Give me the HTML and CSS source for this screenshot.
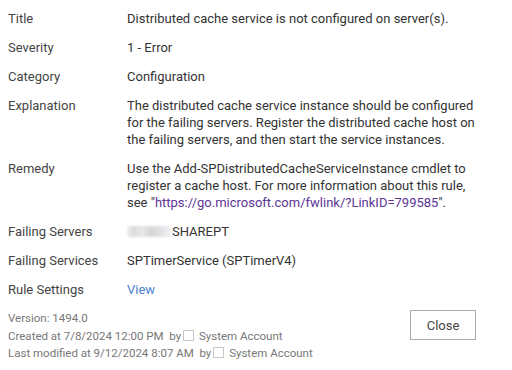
FILE: index.html
```html
<!DOCTYPE html>
<html lang="en">
<head>
  <meta charset="UTF-8">
  <title>Health Analyzer Rule</title>
  <link rel="stylesheet" href="styles.css">
</head>
<body>
  <div class="details">
    <div class="label">Title</div>
    <div class="value">Distributed cache service is not configured on server(s).</div>

    <div class="label">Severity</div>
    <div class="value">1 - Error</div>

    <div class="label">Category</div>
    <div class="value">Configuration</div>

    <div class="label">Explanation</div>
    <div class="value">The distributed cache service instance should be configured for the failing servers. Register the distributed cache host on the failing servers, and then start the service instances.</div>

    <div class="label">Remedy</div>
    <div class="value">Use the Add-SPDistributedCacheServiceInstance cmdlet to register a cache host. For more information about this rule, see "<a class="visited" href="#">https://go.microsoft.com/fwlink/?LinkID=799585</a>".</div>

    <div class="label">Failing Servers</div>
    <div class="value"><span class="blurred"></span>SHAREPT</div>

    <div class="label">Failing Services</div>
    <div class="value">SPTimerService (SPTimerV4)</div>

    <div class="label">Rule Settings</div>
    <div class="value"><a class="link" href="#">View</a></div>
  </div>

  <div class="footer">
    <div class="meta">
      <div>Version: 1494.0</div>
      <div>Created at 7/8/2024 12:00 PM&nbsp; by<span class="user-box"></span> System Account</div>
      <div>Last modified at 9/12/2024 8:07 AM&nbsp; by<span class="user-box"></span> System Account</div>
    </div>
    <button class="btn">Close</button>
  </div>
</body>
</html>
```

FILE: styles.css
```css
body {
  font-family: Roboto, 'Noto Sans', sans-serif;
  font-size: 13px;
  margin: 0;
  padding: 10px 36px 0 8px;
  background-color: white;
  color: #333;
}

.details {
  display: grid;
  grid-template-columns: 119px 350px;
  row-gap: 12px;
  line-height: 17px;
}

.label {
  color: #444;
}

.visited {
  color: #5c3594;
  text-decoration: none;
}

.link {
  color: #4a7fd0;
  text-decoration: none;
}

.blurred {
  display: inline-block;
  width: 44px;
  height: 11px;
  margin-right: 1px;
  vertical-align: -1px;
  background: linear-gradient(90deg, #f0f0f0 0, #dcdcdc 15%, #e8e8e8 35%, #d8d6d3 55%, #e0e0e6 75%, #f2f2f2 100%);
  filter: blur(0.8px);
}

.footer {
  display: flex;
  justify-content: space-between;
  align-items: flex-start;
  margin-top: 12px;
}

.meta {
  font-size: 11.5px;
  line-height: 17.5px;
  color: #777;
}

.user-box {
  display: inline-block;
  width: 9px;
  height: 9px;
  border: 1px solid #c8c8c8;
  margin: 0 2px 0 2px;
  vertical-align: -1px;
}

.btn {
  font-family: inherit;
  font-size: 13px;
  width: 66px;
  height: 30px;
  background-color: white;
  color: #444;
  border: 1px solid #ababab;
  border-radius: 0;
  cursor: pointer;
}
```
